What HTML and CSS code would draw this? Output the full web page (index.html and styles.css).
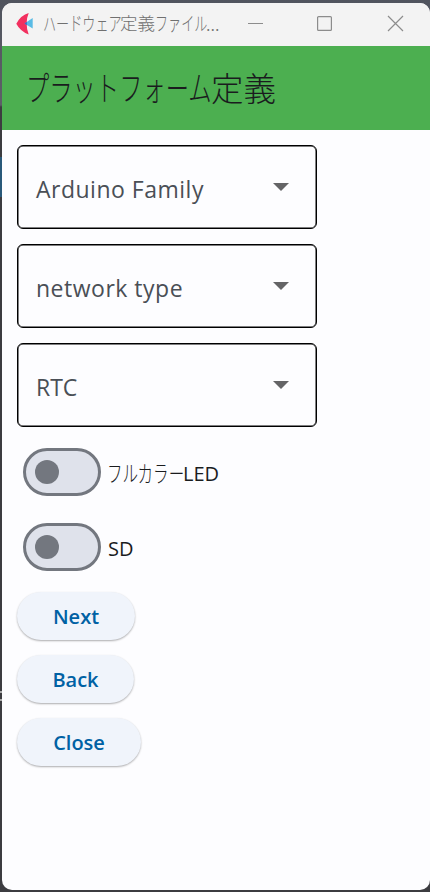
FILE: index.html
```html
<!DOCTYPE html>
<html lang="ja">
<head>
<meta charset="utf-8">
<title>ハードウェア定義ファイル</title>
<link rel="stylesheet" href="styles.css">
</head>
<body>
<div class="window">
  <header class="titlebar">
    <svg class="logo" width="18" height="24" viewBox="0 0 18 24"><path d="M12.700 1 Q8.500 11 12.700 22.500 Q4 19 0.300 11.700 Q5 3 12.700 1Z" fill="#f2305f"/><path d="M8.500 11.500 L16.700 6 V16.500Z" fill="#59bbe5"/><path d="M8.500 11.500 L11 9.800 Q10.600 11.500 11.200 13.200Z" fill="#3b6fc4"/></svg>
    <div class="caption"><span class="kana cap-a">ハードウェア</span><span class="cap-kanji">定義</span><span class="kana cap-b">ファイル</span><span>...</span></div>
    <svg class="controls" width="160" height="20" viewBox="0 0 160 20" fill="none" stroke="#8c8c8c" stroke-width="1.200"><path d="M0 9.500H15"/><rect x="69.600" y="2.600" width="13.800" height="13.800" rx="1"/><path d="M140 2L155 17M155 2L140 17"/></svg>
  </header>
  <div class="appbar"><h1><span class="kana title-kana">プラットフォーム</span><span class="title-kanji">定義</span></h1></div>
  <main>
    <div class="select"><span class="label family">Arduino Family</span><i class="arrow"></i></div>
    <div class="select"><span class="label network">network type</span><i class="arrow"></i></div>
    <div class="select"><span class="label rtc">RTC</span><i class="arrow"></i></div>
    <div class="option"><span class="switch"><i></i></span><span class="kana led-kana">フルカラー</span><span class="led">LED</span></div>
    <div class="option"><span class="switch"><i></i></span><span class="sd">SD</span></div>
    <button class="next">Next</button>
    <button class="back">Back</button>
    <button class="close">Close</button>
  </main>
</div>
</body>
</html>
```
FILE: styles.css
```css
* { box-sizing: border-box; }
body {
  margin: 0;
  height: 892px;
  padding: 3px 0 2px 2px;
  overflow: hidden;
  background:
    linear-gradient(#29597a, #29597a) 0 157px / 2px 40px no-repeat,
    linear-gradient(#aaa, #aaa) 0 691px / 2px 2px no-repeat,
    linear-gradient(#aaa, #aaa) 0 699px / 2px 2px no-repeat,
    linear-gradient(#50545e 0, #5d5f68 105px, #3c3c40 107px, #3c3c40 100%);
  font-family: "Open Sans", "Noto Sans CJK JP", sans-serif;
}
.window {
  height: 887px;
  border-radius: 10px;
  overflow: hidden;
  background: #fdfdff;
}
.titlebar {
  display: flex;
  align-items: center;
  height: 43px;
  padding-left: 14px;
  background: #f3f3f3;
}
.logo { flex: none; margin-top: -1px; }
.caption {
  display: flex;
  width: 177px;
  margin: -4px 28px 0 9px;
  font: 300 18px/24px "Noto Sans CJK JP", sans-serif;
  color: #707070;
  white-space: nowrap;
}
.controls { flex: none; margin-top: -1px; }
.kana { display: block; white-space: nowrap; transform-origin: 0 50%; }
.cap-a { width: 77px; font-size: 19px; transform: scaleX(.69); }
.cap-kanji { width: 35px; font-size: 17.5px; }
.cap-b { width: 51px; font-size: 19px; transform: scaleX(.69); }
.appbar {
  height: 84px;
  padding: 19px 0 0 24px;
  background: #4caf50;
}
h1 {
  display: flex;
  margin: 0;
  font: 300 32.5px/44px "Noto Sans CJK JP", sans-serif;
  color: #1a1c1e;
}
.title-kana { width: 185px; font-size: 34px; transform: scaleX(.685); }
main {
  display: flex;
  flex-direction: column;
  align-items: flex-start;
  gap: 15px;
  padding: 15px;
}
.select {
  display: flex;
  align-items: center;
  justify-content: space-between;
  width: 300px;
  height: 84px;
  padding: 0 27px 0 18px;
  border: 1px solid #000;
  border-radius: 6px;
  box-shadow: inset 0 0 0 .500px #000;
}
.label {
  padding-top: 3px;
  font: 400 23px/32px "Open Sans", sans-serif;
  color: #4a4f56;
  white-space: nowrap;
}
.family { letter-spacing: .5px; }
.network { letter-spacing: .5px; }
.rtc { letter-spacing: 0; }
.arrow {
  width: 16px;
  height: 8px;
  background: #646466;
  clip-path: polygon(0 0, 100% 0, 50% 100%);
}
.option {
  display: flex;
  align-items: center;
  height: 60px;
  padding-left: 6px;
  font-size: 20px;
  line-height: 28px;
  color: #1a1c1e;
}
.switch {
  width: 78px;
  height: 48px;
  margin-right: 6px;
  padding: 9px;
  border: 3px solid #73777f;
  border-radius: 24px;
  background: #dfe2eb;
}
.switch i {
  display: block;
  width: 24px;
  height: 24px;
  border-radius: 50%;
  background: #73777f;
}
.led-kana { width: 76px; font: 300 22.500px/28px "Noto Sans CJK JP", sans-serif; transform: scaleX(.69); }
.led, .sd { padding-top: 3px; }
.sd { padding-left: 1px; }
button {
  height: 48px;
  padding: 2px 0 0;
  border: 0;
  border-radius: 24px;
  background: #f0f4fb;
  box-shadow: 0 1px 2px rgba(0,0,0,.32);
  font: 600 20px/28px "Open Sans", sans-serif;
  color: #0061a4;
}
.next { width: 118px; }
.back { width: 117px; }
.close { width: 124px; }
```
